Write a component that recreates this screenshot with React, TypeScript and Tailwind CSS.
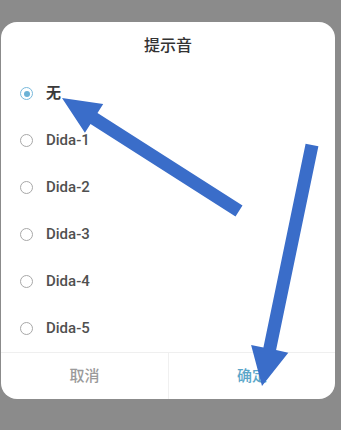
import React from "react";

type Pt = [number, number];

function arrowPoints(tail: Pt, tip: Pt, w: number, L: number, H: number): string {
  const dx = tip[0] - tail[0];
  const dy = tip[1] - tail[1];
  const len = Math.hypot(dx, dy);
  const ux = dx / len;
  const uy = dy / len;
  const nx = -uy;
  const ny = ux;
  const bx = tip[0] - ux * L;
  const by = tip[1] - uy * L;
  const pts: Pt[] = [
    [tail[0] + (nx * w) / 2, tail[1] + (ny * w) / 2],
    [bx + (nx * w) / 2, by + (ny * w) / 2],
    [bx + (nx * H) / 2, by + (ny * H) / 2],
    [tip[0], tip[1]],
    [bx - (nx * H) / 2, by - (ny * H) / 2],
    [bx - (nx * w) / 2, by - (ny * w) / 2],
    [tail[0] - (nx * w) / 2, tail[1] - (ny * w) / 2],
  ];
  return pts.map((p) => `${p[0].toFixed(1)},${p[1].toFixed(1)}`).join(" ");
}

const items = ["无", "Dida-1", "Dida-2", "Dida-3", "Dida-4", "Dida-5"];

export default function App() {
  return (
    <div
      className="relative w-[341px] h-[430px] bg-[#8b8b8b] overflow-hidden pt-[22px] pl-[1px]"
      style={{ fontFamily: 'Roboto, "Noto Sans CJK SC", sans-serif' }}
    >
      <div className="w-[334px] h-[377px] bg-white rounded-[16px] flex flex-col overflow-hidden">
        <div className="h-[48px] flex items-center justify-center text-[16px] font-medium text-[#333333]">
          提示音
        </div>
        <div className="flex flex-col">
          {items.map((t, i) => (
            <div key={t} className="h-[47px] flex items-center pl-[19px]">
              {i === 0 ? (
                <span className="w-[13px] h-[13px] rounded-full border-[1.5px] border-[#78b9dc] flex items-center justify-center">
                  <span className="w-[6px] h-[6px] rounded-full bg-[#6cb2d6]" />
                </span>
              ) : (
                <span className="w-[13px] h-[13px] rounded-full border border-[#a8a8a8]" />
              )}
              <span
                className={
                  "ml-[13px] text-[15px] " +
                  (i === 0 ? "font-bold text-[#3a3a3a]" : "font-medium text-[#505050]")
                }
              >
                {t}
              </span>
            </div>
          ))}
        </div>
        <div className="flex-1 flex border-t border-[#efefef]">
          <div className="w-[168px] flex items-center justify-center text-[15px] font-medium text-[#9a9a9a] border-r border-[#f0f0f0]">
            取消
          </div>
          <div className="flex-1 flex items-center justify-center text-[15px] font-medium text-[#5ba6c9]">
            确定
          </div>
        </div>
      </div>
      <svg className="absolute left-0 top-0" width="341" height="430" viewBox="0 0 341 430">
        <polygon points={arrowPoints([239, 211], [62, 98], 13, 38, 34)} fill="#3a6dc9" />
        <polygon points={arrowPoints([312, 145], [262, 386], 13, 38, 38)} fill="#3a6dc9" />
      </svg>
    </div>
  );
}
